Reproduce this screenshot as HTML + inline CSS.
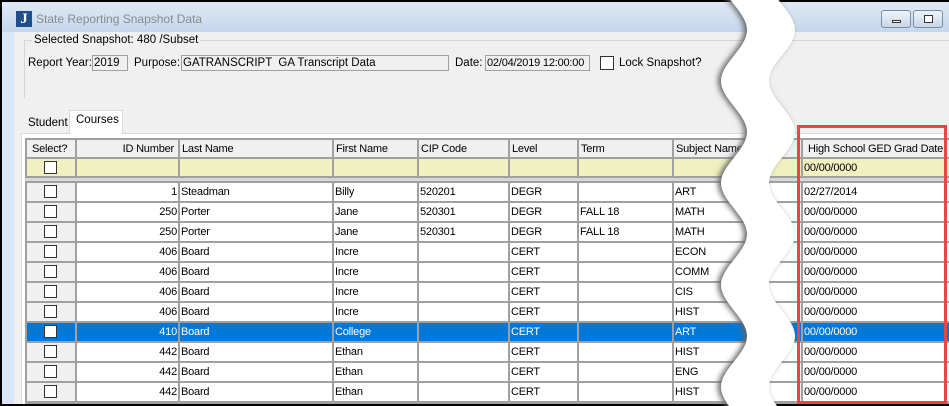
<!DOCTYPE html>
<html><head><meta charset="utf-8"><style>
*{margin:0;padding:0;box-sizing:border-box}
html,body{width:949px;height:406px;overflow:hidden}
body{background:#fff;font-family:"Liberation Sans",Arial,sans-serif;font-size:11px;color:#000;position:relative}
.a{position:absolute;white-space:nowrap}
.cb{position:absolute;width:13px;height:13px;border:1px solid #333;background:#fff}
.t{position:absolute;white-space:nowrap;line-height:18px;font-size:11px;letter-spacing:-0.2px}
</style></head><body>
<div class="a" style="left:0;top:0;width:949px;height:406px;background:#dbe6f4;border:2px solid #000;border-right:none;border-bottom:none"></div>
<div class="a" style="left:2px;top:2px;width:947px;height:30px;background:linear-gradient(#dfe9f5,#c5d7ec)"></div>
<div class="a" style="left:16px;top:11px;width:16px;height:16px;background:#1f4e8c;color:#fff;font-family:'Liberation Serif',serif;font-weight:bold;font-size:15px;line-height:16px;text-align:center">J</div>
<div class="a" style="left:36px;top:12px;color:#8a8a8a;font-size:12px">State Reporting Snapshot Data</div>
<div class="a" style="left:881px;top:10px;width:30px;height:18px;border:1px solid #7a8ca3;border-radius:3px;background:linear-gradient(#eef3f9,#c9d6e6)"><div class="a" style="left:10px;top:9px;width:9px;height:3px;border:1px solid #333;background:#fff"></div></div>
<div class="a" style="left:913px;top:10px;width:30px;height:18px;border:1px solid #7a8ca3;border-radius:3px;background:linear-gradient(#eef3f9,#c9d6e6)"><div class="a" style="left:10px;top:4px;width:9px;height:8px;border:1px solid #333;background:#fff"></div></div>
<div class="a" style="left:14px;top:32px;width:935px;height:374px;background:#f0f0f0"></div>
<div class="a" style="left:24px;top:40px;width:925px;height:58px;border-left:1px solid #d5d5d5;border-top:1px solid #d5d5d5"></div>
<div class="a" style="left:32px;top:33px;background:#f0f0f0;padding:0 2px;font-size:11.5px;line-height:14px">Selected Snapshot: 480 /Subset</div>
<div class="a" style="left:28px;top:57px;font-size:11.5px">Report Year:</div>
<div class="a" style="left:92px;top:55px;width:36px;height:16px;border:1px solid #a0a0a0;background:#f0f0f0;padding-left:1px;font-size:11.5px;line-height:14px">2019</div>
<div class="a" style="left:134px;top:57px;font-size:11.5px">Purpose:</div>
<div class="a" style="left:181px;top:55px;width:268px;height:16px;border:1px solid #a0a0a0;background:#f0f0f0;padding-left:1px;font-size:11.5px;line-height:14px;white-space:pre">GATRANSCRIPT  GA Transcript Data</div>
<div class="a" style="left:455px;top:57px;font-size:11.5px">Date:</div>
<div class="a" style="left:485px;top:55px;width:105px;height:16px;border:1px solid #a0a0a0;background:#f0f0f0;padding-left:1px;font-size:11px;line-height:14px;letter-spacing:-0.2px;overflow:hidden">02/04/2019 12:00:00</div>
<div class="cb" style="left:600px;top:56px;width:14px;height:14px"></div>
<div class="a" style="left:619px;top:57px;font-size:11.5px">Lock Snapshot?</div>
<div class="a" style="left:21px;top:133px;width:928px;height:273px;background:#fff;border:1px solid #d9d9d9"></div>
<div class="a" style="left:28px;top:117px;font-size:11.5px">Student</div>
<div class="a" style="left:69px;top:110px;width:54px;height:24px;background:#fff;border:1px solid #d9d9d9;border-bottom:none"></div>
<div class="a" style="left:76px;top:114px;font-size:11.5px">Courses</div>
<div class="a" style="left:25px;top:138px;width:924px;height:40px;background:#a0a0a0"></div>
<div class="a" style="left:25px;top:178px;width:924px;height:5px;background:#d8d8d8"></div>
<div class="a" style="left:25px;top:181px;width:924px;height:223px;background:#a0a0a0"></div>
<div id="g"></div>
<div class="a" style="left:0;top:404px;width:949px;height:2px;background:#000"></div>
<svg class="a" style="left:0;top:0" width="949" height="406">
<defs><filter id="b" x="-50%" y="-10%" width="200%" height="120%"><feGaussianBlur stdDeviation="3"/></filter></defs>
<path d="M721,-21 C721,-3 747,12 747,30 C747,48 721,63 721,81 C721,99 747,114 747,132 C747,150 721,165 721,183 C721,201 747,216 747,234 C747,252 721,267 721,285 C721,303 747,318 747,336 C747,354 721,369 721,387 C721,405 747,420 747,438 L795,438 C795,420 769,405 769,387 C769,369 795,354 795,336 C795,318 769,303 769,285 C769,267 795,252 795,234 C795,216 769,201 769,183 C769,165 795,150 795,132 C795,114 769,99 769,81 C769,63 795,48 795,30 C795,12 769,-3 769,-21 Z" fill="#666" filter="url(#b)" transform="translate(-3,0)"/>
<path d="M721,-21 C721,-3 747,12 747,30 C747,48 721,63 721,81 C721,99 747,114 747,132 C747,150 721,165 721,183 C721,201 747,216 747,234 C747,252 721,267 721,285 C721,303 747,318 747,336 C747,354 721,369 721,387 C721,405 747,420 747,438 L795,438 C795,420 769,405 769,387 C769,369 795,354 795,336 C795,318 769,303 769,285 C769,267 795,252 795,234 C795,216 769,201 769,183 C769,165 795,150 795,132 C795,114 769,99 769,81 C769,63 795,48 795,30 C795,12 769,-3 769,-21 Z" fill="#fff"/>
<rect x="798.5" y="126.5" width="147" height="276" fill="none" stroke="#e84545" stroke-width="3"/>
</svg>
<script>
var cols=[27,77,180,334,419,510,579,674,803,949];
var rows=[["1","Steadman","Billy","520201","DEGR","","ART","02/27/2014"],
["250","Porter","Jane","520301","DEGR","FALL 18","MATH","00/00/0000"],
["250","Porter","Jane","520301","DEGR","FALL 18","MATH","00/00/0000"],
["406","Board","Incre","","CERT","","ECON","00/00/0000"],
["406","Board","Incre","","CERT","","COMM","00/00/0000"],
["406","Board","Incre","","CERT","","CIS","00/00/0000"],
["406","Board","Incre","","CERT","","HIST","00/00/0000"],
["410","Board","College","","CERT","","ART","00/00/0000"],
["442","Board","Ethan","","CERT","","HIST","00/00/0000"],
["442","Board","Ethan","","CERT","","ENG","00/00/0000"],
["442","Board","Ethan","","CERT","","HIST","00/00/0000"]];
var h="";
function row(y,ht,bg0,bg,vals,color,chk,right){
 for(var i=0;i<9;i++){
  var l=cols[i],w=cols[i+1]-cols[i]-2;if(i==8)w=cols[9]-l;
  h+='<div class="a" style="left:'+l+'px;top:'+y+'px;width:'+w+'px;height:'+ht+'px;background:'+(i==0?bg0:bg)+'"></div>';
  if(i==0){if(chk)h+='<div class="cb" style="left:44px;top:'+(y+2)+'px"></div>';}
  else if(vals[i-1]!==undefined&&vals[i-1]!==""){
   var st=(i==1&&right)?'right:'+(949-cols[2]+3)+'px':'left:'+(l+1)+'px';
   h+='<div class="t" style="'+st+';top:'+y+'px;color:'+color+'">'+vals[i-1]+'</div>';
  }
 }
}
row(140,17,"#f0f0f0","#f0f0f0",[],"#000",false,false);
h+='<div class="t" style="left:32px;top:140px">Select?</div><div class="t" style="right:775px;top:140px">ID Number</div>';
var hd=["Last Name","First Name","CIP Code","Level","Term","Subject Name","High School GED Grad Date"];
var hx=[182,336,421,512,581,676,808];
for(var k=0;k<7;k++)h+='<div class="t" style="left:'+hx[k]+'px;top:140px">'+hd[k]+'</div>';
row(159,17,"#f0f0c0","#f0f0c0",["","","","","","","","00/00/0000"],"#000",true,false);
for(var r=0;r<rows.length;r++){
 var y=183+20*r,sel=r==7;
 row(y,18,sel?"#0078d7":"#f0f0f0",sel?"#0078d7":"#fff",rows[r],sel?"#fff":"#000",true,true);
}
document.getElementById("g").innerHTML=h;
</script>
</body></html>
